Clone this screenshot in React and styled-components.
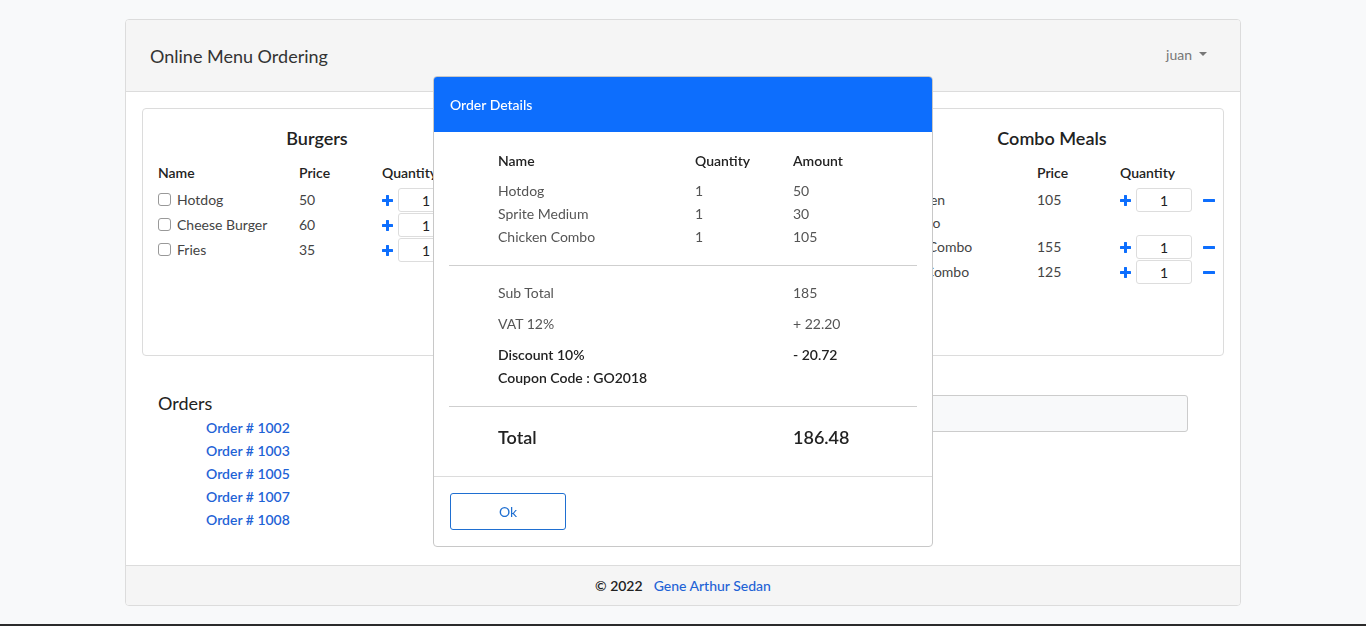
import React from "react";
import styled, { createGlobalStyle } from "styled-components";

const GlobalStyle = createGlobalStyle`
  * { box-sizing: border-box; }
  body {
    margin: 0;
    font-family: "Lato", "Open Sans", sans-serif;
    font-size: 14px;
    color: #333;
    background: #f8f9fa;
  }
`;

// the middle menu (drinks) sits fully under the modal, so it is left empty
const menus = [
  {
    title: "Burgers",
    minus: false,
    items: [
      { name: "Hotdog", price: 50, check: true },
      { name: "Cheese Burger", price: 60, check: true },
      { name: "Fries", price: 35, check: true },
    ],
  },
  null,
  {
    title: "Combo Meals",
    minus: true,
    nameMax: "84px",
    items: [
      { name: "Chicken Combo", price: 105 },
      { name: "Pork Combo", price: 155 },
      { name: "Fish Combo", price: 125 },
    ],
  },
];

const orders = ["1002", "1003", "1005", "1007", "1008"];

const lines = [
  { name: "Hotdog", qty: 1, amount: 50 },
  { name: "Sprite Medium", qty: 1, amount: 30 },
  { name: "Chicken Combo", qty: 1, amount: 105 },
];

const PlusIcon = () => (
  <svg width="11" height="11" viewBox="0 0 11 11">
    <path d="M5.5 1v9M1 5.5h9" stroke="#0d6efd" strokeWidth="3" strokeLinecap="round" />
  </svg>
);

const MinusIcon = () => (
  <svg width="12" height="11" viewBox="0 0 12 11">
    <path d="M1 5.5h10" stroke="#0d6efd" strokeWidth="3" strokeLinecap="round" />
  </svg>
);

const MenuColumn = ({ menu }) => {
  if (!menu) return <Column />;
  return (
    <Column $shift={menu.minus ? "6px" : "0"}>
      <ColumnTitle>{menu.title}</ColumnTitle>
      <ItemGrid>
        <HeadCell>Name</HeadCell>
        <HeadCell>Price</HeadCell>
        <HeadCell>Quantity</HeadCell>
        {menu.items.map((item) => (
          <React.Fragment key={item.name}>
            <Cell>
              {item.check && <Check />}
              <NameText $max={menu.nameMax}>{item.name}</NameText>
            </Cell>
            <Cell>{item.price}</Cell>
            <QtyCell>
              <PlusIcon />
              <QtyInput>1</QtyInput>
              {menu.minus && (
                <MinusWrap>
                  <MinusIcon />
                </MinusWrap>
              )}
            </QtyCell>
          </React.Fragment>
        ))}
      </ItemGrid>
    </Column>
  );
};

export default function App() {
  return (
    <Page>
      <GlobalStyle />
      <Card>
        <Header>
          <Brand>Online Menu Ordering</Brand>
          <UserMenu>
            juan <Caret />
          </UserMenu>
        </Header>
        <Body>
          <MenuCard>
            {menus.map((m, i) => (
              <MenuColumn key={i} menu={m} />
            ))}
          </MenuCard>
          <OrdersRow>
            <div>
              <OrdersTitle>Orders</OrdersTitle>
              <OrderList>
                {orders.map((o) => (
                  <li key={o}>
                    <OrderLink href="#">Order # {o}</OrderLink>
                  </li>
                ))}
              </OrderList>
            </div>
            <CouponBox>
              <CouponInput />
            </CouponBox>
          </OrdersRow>
        </Body>
        <Footer>
          <span>© 2022</span>
          <FooterLink href="#">Gene Arthur Sedan</FooterLink>
        </Footer>
      </Card>

      <Modal>
        <ModalHeader>Order Details</ModalHeader>
        <ModalBody>
          <Section>
            <DetailGrid>
              <DetailHead>Name</DetailHead>
              <DetailHead>Quantity</DetailHead>
              <DetailHead>Amount</DetailHead>
              {lines.map((l) => (
                <React.Fragment key={l.name}>
                  <DetailCell>{l.name}</DetailCell>
                  <DetailCell>{l.qty}</DetailCell>
                  <DetailCell>{l.amount}</DetailCell>
                </React.Fragment>
              ))}
            </DetailGrid>
          </Section>
          <Divider />
          <Section $pad="15px 0 17px">
            <SumRow>
              <span>Sub Total</span>
              <span>185</span>
            </SumRow>
            <SumRow>
              <span>VAT 12%</span>
              <span>+ 22.20</span>
            </SumRow>
            <SumRow $bold $tight>
              <span>
                Discount 10%
                <br />
                Coupon Code : GO2018
              </span>
              <span>- 20.72</span>
            </SumRow>
          </Section>
          <Divider />
          <Section $pad="18px 0 27px">
            <TotalRow>
              <span>Total</span>
              <span>186.48</span>
            </TotalRow>
          </Section>
        </ModalBody>
        <ModalFooter>
          <OkButton>Ok</OkButton>
        </ModalFooter>
      </Modal>
    </Page>
  );
}

const Page = styled.div`
  min-height: 626px;
  padding-top: 19px;
  border-bottom: 2px solid #2b2b2b;
`;

const Card = styled.div`
  width: 1116px;
  margin: 0 auto;
  background: #fff;
  border: 1px solid #dcdcdc;
  border-radius: 4px;
  overflow: hidden;
`;

const Header = styled.div`
  height: 72px;
  padding: 0 33px 0 24px;
  display: flex;
  align-items: center;
  justify-content: space-between;
  background: #f5f5f5;
  border-bottom: 1px solid #dcdcdc;
`;

const Brand = styled.div`
  font-size: 18px;
  color: #333;
`;

const UserMenu = styled.div`
  display: flex;
  align-items: center;
  gap: 7px;
  font-size: 14px;
  color: #777;
  margin-top: -2px;
`;

const Caret = styled.span`
  width: 0;
  height: 0;
  border-left: 4px solid transparent;
  border-right: 4px solid transparent;
  border-top: 4px solid #777;
  margin-top: -2px;
`;

const Body = styled.div`
  height: 473px;
  padding: 16px 16px 0;
`;

const MenuCard = styled.div`
  height: 248px;
  border: 1px solid #dcdcdc;
  border-radius: 4px;
  padding: 18px 15px 0;
  display: grid;
  grid-template-columns: repeat(3, minmax(0, 1fr));
  column-gap: 48px;
`;

const Column = styled.div`
  display: flex;
  flex-direction: column;
  padding-left: ${(p) => p.$shift || "0"};
`;

const ColumnTitle = styled.h5`
  margin: 0 0 12px;
  font-size: 18px;
  font-weight: 600;
  line-height: 22px;
  text-align: center;
  color: #222;
`;

const ItemGrid = styled.div`
  display: grid;
  grid-template-columns: 141px 83px 1fr;
  align-items: start;
  row-gap: 1px;
`;

const HeadCell = styled.div`
  font-weight: 600;
  line-height: 24px;
  color: #222;
  margin-bottom: 2px;
`;

const Cell = styled.div`
  display: flex;
  align-items: center;
  line-height: 23px;
  color: #444;
  padding-right: 8px;
`;

const NameText = styled.span`
  max-width: ${(p) => p.$max || "none"};
`;

const Check = styled.span`
  width: 13px;
  height: 13px;
  border: 1px solid #999;
  border-radius: 3px;
  margin-right: 6px;
  flex: none;
`;

const QtyCell = styled.div`
  display: flex;
  align-items: center;
  height: 24px;
  gap: 5px;
  white-space: nowrap;
`;

const QtyInput = styled.div`
  width: 56px;
  height: 24px;
  flex: none;
  border: 1px solid #ddd;
  border-radius: 3px;
  display: flex;
  align-items: center;
  justify-content: center;
  font-size: 14px;
  color: #222;
`;

const MinusWrap = styled.span`
  display: flex;
  margin-left: 6px;
`;

const OrdersRow = styled.div`
  display: grid;
  grid-template-columns: 1fr 1fr;
  padding: 36px 16px 0;
`;

const OrdersTitle = styled.div`
  font-size: 18px;
  line-height: 22px;
  color: #222;
`;

const OrderList = styled.ul`
  list-style: none;
  margin: 2px 0 0;
  padding: 0 0 0 48px;
  li {
    line-height: 23px;
  }
`;

const OrderLink = styled.a`
  font-size: 14px;
  font-weight: 600;
  color: #1f63d6;
  text-decoration: none;
`;

const CouponBox = styled.div`
  padding: 3px 20px 0 0;
`;

const CouponInput = styled.div`
  height: 37px;
  background: #f8f9fa;
  border: 1px solid #ccc;
  border-radius: 3px;
`;

const Footer = styled.div`
  height: 40px;
  background: #f5f5f5;
  border-top: 1px solid #dcdcdc;
  display: flex;
  align-items: center;
  justify-content: center;
  gap: 11px;
  font-size: 14px;
  font-weight: 600;
  color: #222;
  padding-bottom: 1px;
`;

const FooterLink = styled.a`
  color: #1f63d6;
  font-weight: 500;
  text-decoration: none;
`;

const Modal = styled.div`
  position: fixed;
  top: 76px;
  left: 50%;
  transform: translateX(-50%);
  width: 500px;
  background: #fff;
  border: 1px solid #c8c8c8;
  border-radius: 4px;
  overflow: hidden;
`;

const ModalHeader = styled.div`
  height: 55px;
  background: #0d6efd;
  color: #fff;
  font-size: 14px;
  font-weight: 500;
  display: flex;
  align-items: center;
  padding: 0 16px 1px;
`;

const ModalBody = styled.div`
  padding: 0 15px;
`;

const Section = styled.div`
  padding: ${(p) => p.$pad || "17px 0 17px"};
  padding-left: 49px;
  padding-right: 49px;
`;

const DetailGrid = styled.div`
  display: grid;
  grid-template-columns: 197px 98px 1fr;
  line-height: 23px;
`;

const DetailHead = styled.div`
  font-weight: 600;
  color: #222;
  margin-bottom: 7px;
`;

const DetailCell = styled.div`
  color: #555;
`;

const Divider = styled.hr`
  margin: 0;
  border: 0;
  border-top: 1px solid #cfcfcf;
`;

const SumRow = styled.div`
  display: grid;
  grid-template-columns: 295px 1fr;
  line-height: 23px;
  margin-bottom: ${(p) => (p.$tight ? "0" : "8px")};
  color: ${(p) => (p.$bold ? "#222" : "#555")};
  font-weight: ${(p) => (p.$bold ? 600 : 400)};
`;

const TotalRow = styled.div`
  display: grid;
  grid-template-columns: 295px 1fr;
  font-size: 18px;
  line-height: 24px;
  font-weight: 600;
  color: #222;
`;

const ModalFooter = styled.div`
  border-top: 1px solid #dcdcdc;
  padding: 16px 16px 16px;
`;

const OkButton = styled.button`
  width: 116px;
  height: 37px;
  background: #fff;
  border: 1px solid #1f6fd1;
  border-radius: 3px;
  color: #1f6fd1;
  font-family: inherit;
  font-size: 14px;
`;
